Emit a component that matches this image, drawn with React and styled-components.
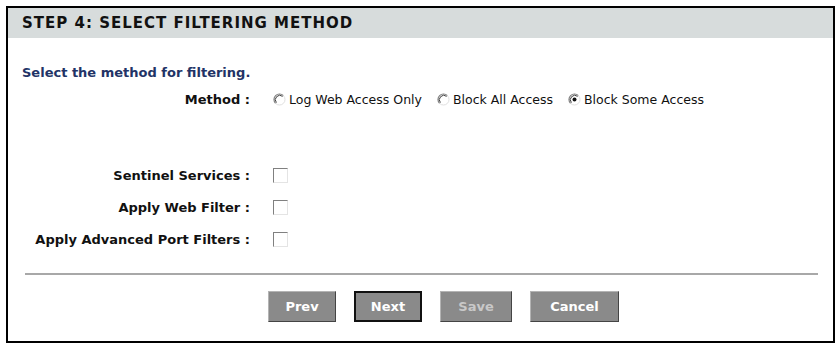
import styled, { createGlobalStyle } from 'styled-components'

const Global = createGlobalStyle`
  html, body {
    margin: 0;
    padding: 0;
    background: #fff;
  }
  body {
    padding: 6px;
    font-family: "DejaVu Sans", Verdana, sans-serif;
  }
`

function Radio({ checked }) {
    return (
        <svg width="13" height="13" viewBox="0 0 13 13">
            <circle cx="6.5" cy="6.5" r="5.5" fill="#fff" />
            <path d="M10.4 2.6 A5.5 5.5 0 0 0 2.6 10.4" fill="none" stroke="#808080" strokeWidth="1.2" />
            <path d="M2.6 10.4 A5.5 5.5 0 0 0 10.4 2.6" fill="none" stroke="#e0e0e0" strokeWidth="1" />
            <path d="M9.6 3.4 A4.4 4.4 0 0 0 3.4 9.6" fill="none" stroke="#404040" strokeWidth="1" />
            {checked && <circle cx="6.5" cy="6.5" r="2" fill="#111" />}
        </svg>
    )
}

export default function App() {
    return (
        <>
            <Global />
            <Panel>
                <Header>STEP 4: SELECT FILTERING METHOD</Header>
                <Intro>Select the method for filtering.</Intro>

                <MethodRow>
                    <Label>Method :</Label>
                    <Options>
                        <Option><Radio /> Log Web Access Only</Option>
                        <Option><Radio /> Block All Access</Option>
                        <Option><Radio checked /> Block Some Access</Option>
                    </Options>
                </MethodRow>

                <Checks>
                    <Row>
                        <Label>Sentinel Services :</Label>
                        <Check />
                    </Row>
                    <Row>
                        <Label>Apply Web Filter :</Label>
                        <Check />
                    </Row>
                    <Row>
                        <Label>Apply Advanced Port Filters :</Label>
                        <Check />
                    </Row>
                </Checks>

                <Divider />

                <Buttons>
                    <Button $w={68}>Prev</Button>
                    <Button $w={68} $focus>Next</Button>
                    <Button $w={72} $disabled>Save</Button>
                    <Button $w={89}>Cancel</Button>
                </Buttons>
            </Panel>
        </>
    )
}

const Panel = styled.div`
    width: 829px;
    height: 337px;
    box-sizing: border-box;
    border: 2px solid #000;
    background: #fff;
    display: flex;
    flex-direction: column;
`
const Header = styled.div`
    height: 30px;
    background: #d7dcdc;
    padding-left: 14px;
    display: flex;
    align-items: center;
    font-size: 15px;
    font-weight: bold;
    letter-spacing: 1px;
    color: #111;
`
const Intro = styled.div`
    margin-top: 27px;
    padding-left: 14px;
    font-size: 13px;
    font-weight: bold;
    color: #223366;
    line-height: 16px;
`
const Label = styled.div`
    width: 242px;
    flex: none;
    text-align: right;
    font-size: 13px;
    font-weight: bold;
    color: #111;
    white-space: nowrap;
`
const MethodRow = styled.div`
    margin-top: 10px;
    display: flex;
    align-items: center;
    gap: 23px;
    height: 16px;
`
const Options = styled.div`
    display: flex;
    align-items: center;
    gap: 15px;
`
const Option = styled.label`
    display: flex;
    align-items: center;
    gap: 3px;
    font-size: 12.5px;
    color: #111;
    white-space: nowrap;
    svg {
        flex: none;
    }
`
const Checks = styled.div`
    margin-top: 60px;
    display: flex;
    flex-direction: column;
    gap: 16px;
`
const Row = styled.div`
    display: flex;
    align-items: center;
    gap: 23px;
    height: 16px;
`
const Check = styled.span`
    width: 15px;
    height: 15px;
    box-sizing: border-box;
    border: 1px solid;
    border-color: #808080 #e4e4e4 #e4e4e4 #808080;
    background: #fff;
`
const Divider = styled.div`
    margin: 26px 15px 0 17px;
    border-top: 2px solid #a8a8a8;
`
const Buttons = styled.div`
    margin-top: 16px;
    padding-left: 260px;
    display: flex;
    gap: 18px;
`
const Button = styled.button`
    width: ${p => p.$w}px;
    height: 31px;
    box-sizing: border-box;
    background: #8a8a8a;
    border: ${p => (p.$focus ? '2px solid #111' : '1px solid')};
    border-color: ${p => (p.$focus ? '#111' : '#b4b4b4 #444 #444 #b4b4b4')};
    font-family: "DejaVu Sans", Verdana, sans-serif;
    font-size: 13px;
    font-weight: bold;
    color: ${p => (p.$disabled ? '#c8c8c8' : '#fff')};
    padding: 0;
`
